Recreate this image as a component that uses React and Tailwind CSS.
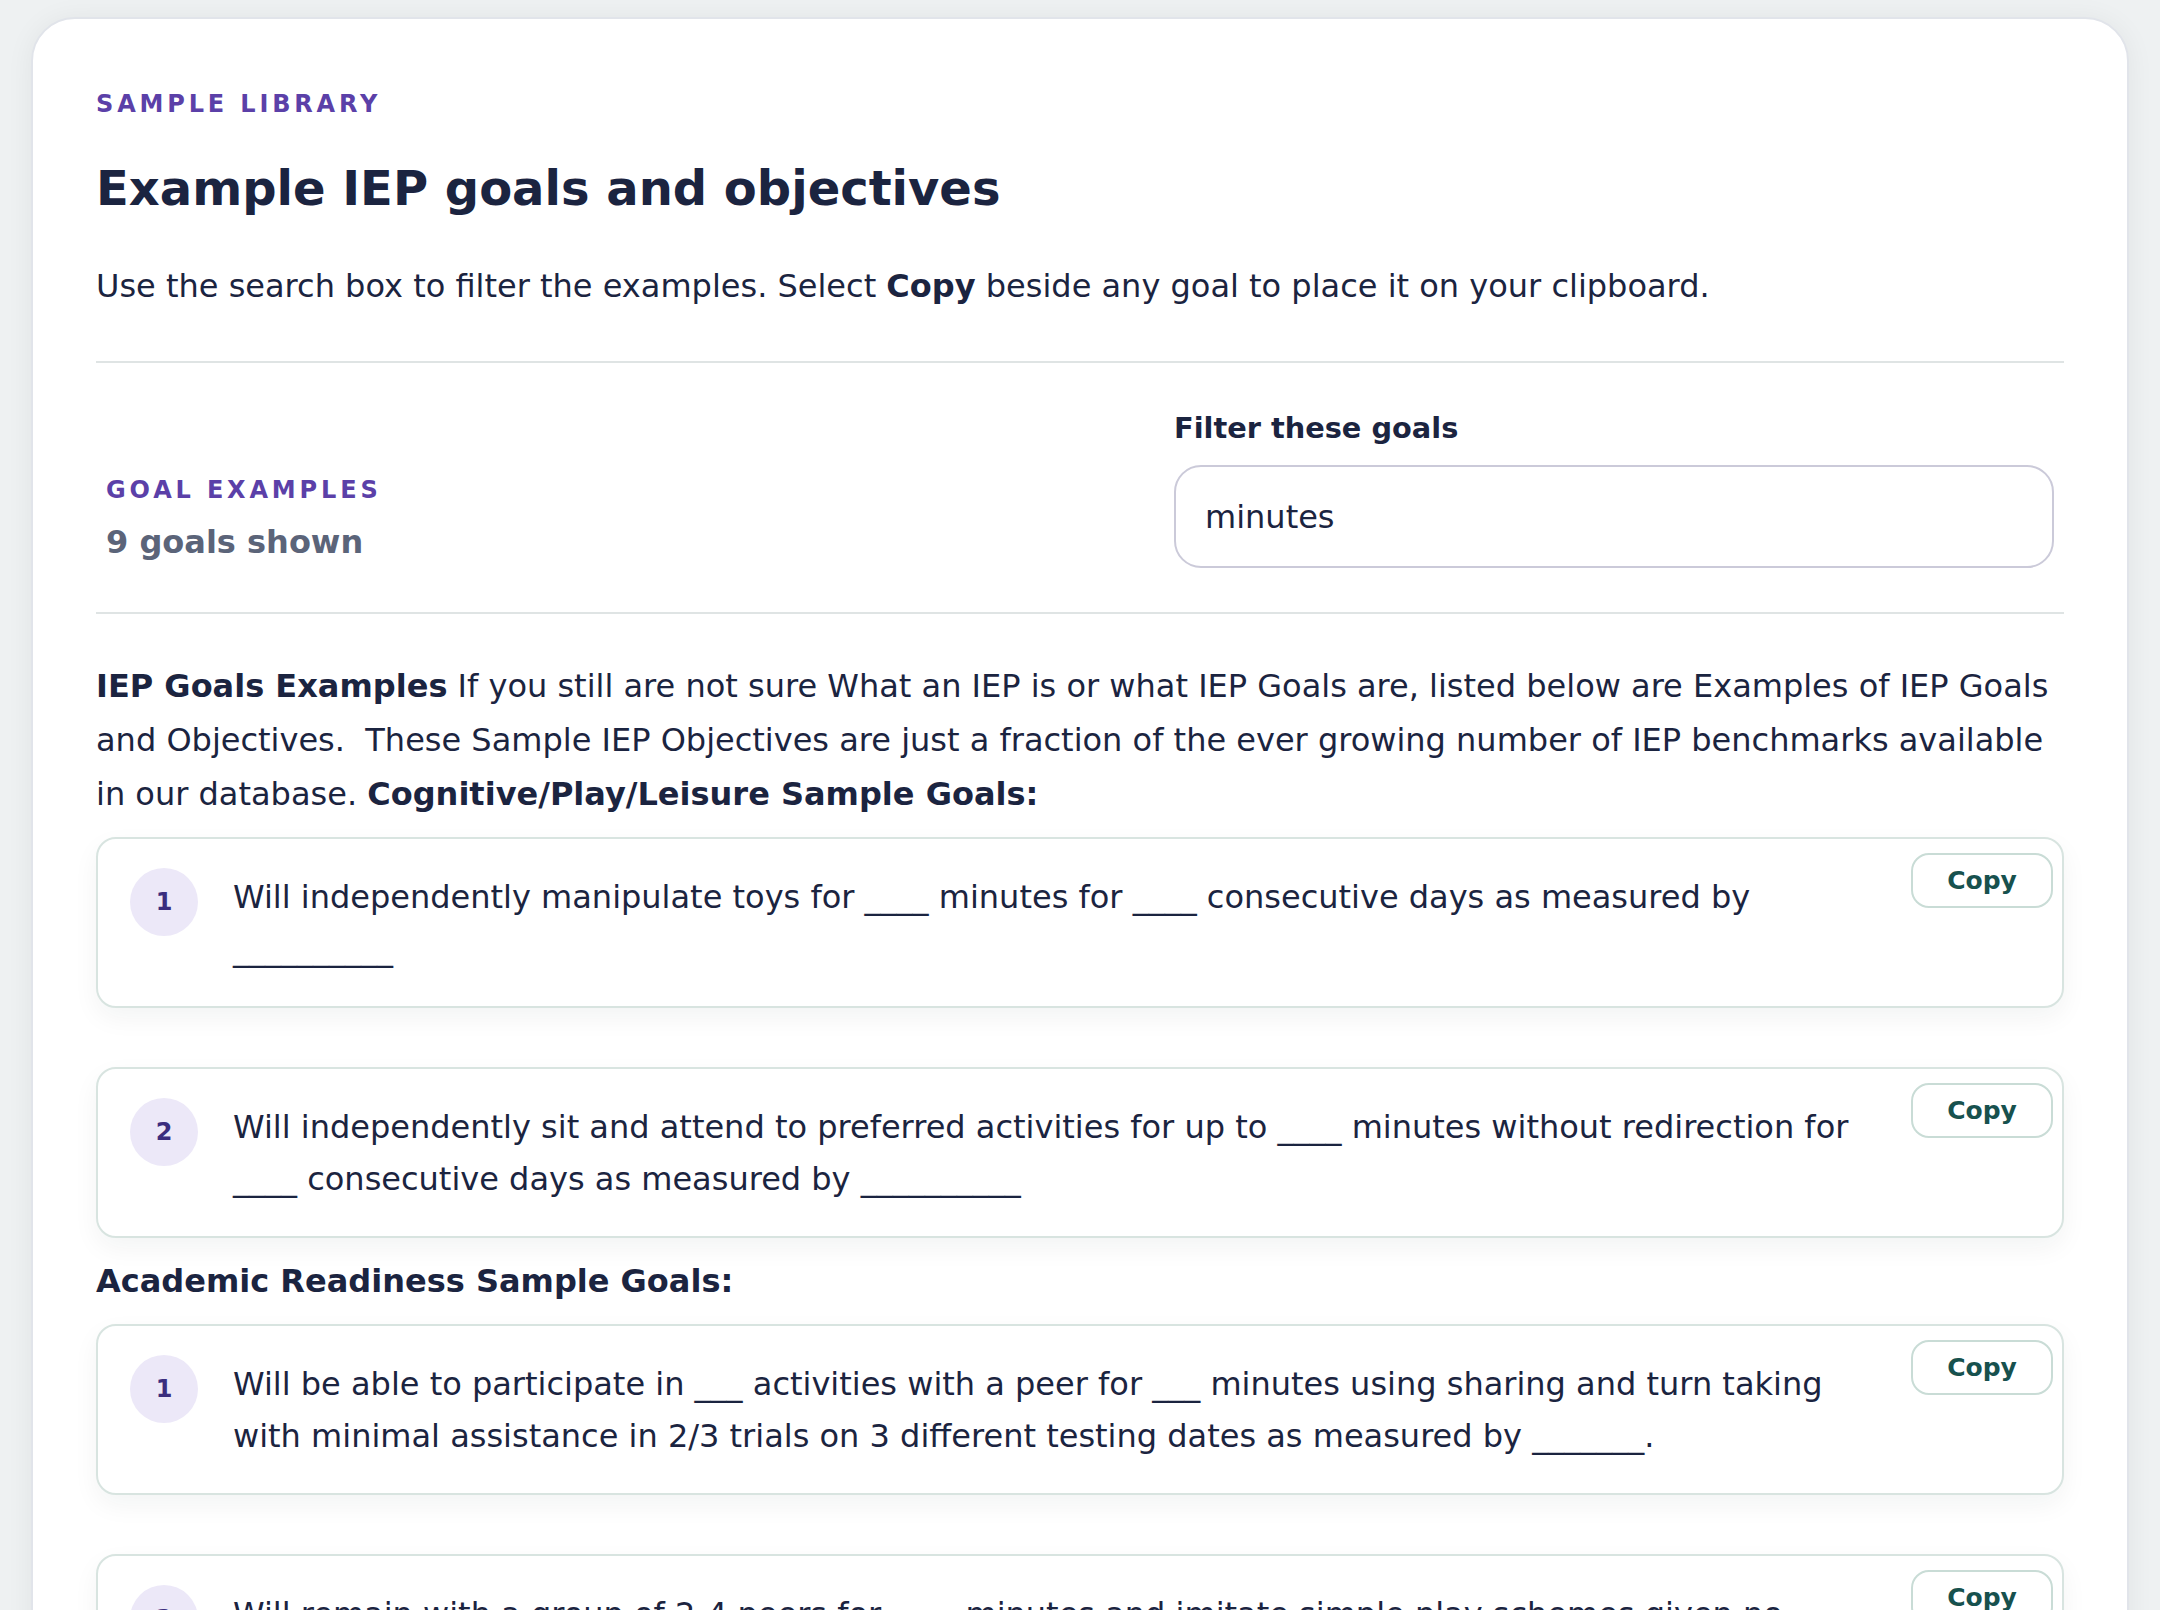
import { useState } from 'react';

const sections = [
  {
    heading: null,
    goals: [
      'Will independently manipulate toys for ____ minutes for ____ consecutive days as measured by __________',
      'Will independently sit and attend to preferred activities for up to ____ minutes without redirection for ____ consecutive days as measured by __________',
    ],
  },
  {
    heading: 'Academic Readiness Sample Goals:',
    goals: [
      'Will be able to participate in ___ activities with a peer for ___ minutes using sharing and turn taking with minimal assistance in 2/3 trials on 3 different testing dates as measured by _______.',
      'Will remain with a group of 2-4 peers for ____ minutes and imitate simple play schemes given no prompts in 4/5 opportunities as measured by _______.',
      'Will attend to a teacher-directed group activity for ___ minutes with no more than 1 redirection in 4/5 trials as measured by _______.',
    ],
  },
  {
    heading: 'Behavior Sample Goals:',
    goals: [
      'Will remain seated during structured work time for ___ minutes with minimal prompting for ___ consecutive days as measured by _______.',
      'Will use a calming strategy within 2 minutes of becoming upset in 4/5 opportunities as measured by _______.',
      'Will transition between activities within 3 minutes of a verbal cue for ___ consecutive days as measured by _______.',
      'Will work independently on an assigned task for ___ minutes without adult support in 4/5 trials as measured by _______.',
    ],
  },
];

function GoalCard({ n, text }) {
  return (
    <li className="flex items-start rounded-[20px] border-2 border-[#d8e4e0] bg-white pt-[14px] pr-[9px] pb-[31px] pl-[32px] shadow-[0_10px_26px_rgba(20,45,45,0.05)]">
      <span className="mt-[15px] flex h-[68px] w-[68px] shrink-0 items-center justify-center rounded-full bg-[#ece8f8] text-[24px] font-bold text-[#3b2d7e]">
        {n}
      </span>
      <p className="mt-[18px] ml-[35px] flex-1 pr-[30px] text-[32px] leading-[52px]">{text}</p>
      <button
        onClick={() => navigator.clipboard?.writeText(text)}
        className="h-[55px] w-[142px] shrink-0 rounded-[18px] border-2 border-[#c9dcd6] bg-white text-[25px] font-bold text-[#17514e]"
      >
        Copy
      </button>
    </li>
  );
}

export default function App() {
  const [query, setQuery] = useState('minutes');
  const q = query.trim().toLowerCase();
  const filtered = sections.map((s) => ({
    ...s,
    goals: s.goals.filter((g) => g.toLowerCase().includes(q)),
  }));
  const shown = filtered.reduce((sum, s) => sum + s.goals.length, 0);

  return (
    <div className="h-screen overflow-hidden bg-[#eef1f2] px-[31px] pt-[17px] font-['DejaVu_Sans',sans-serif] text-[#1b2440]">
      <main className="rounded-[44px] border-2 border-[#e1e4ea] bg-white px-[63px] pt-[69px] pb-[80px] shadow-[0_2px_28px_rgba(16,24,40,0.06)]">
        <p className="text-[24px] leading-[32px] font-bold tracking-[0.16em] text-[#5b40a8]">SAMPLE LIBRARY</p>
        <h1 className="mt-[39px] text-[48px] leading-[58px] font-bold">Example IEP goals and objectives</h1>
        <p className="mt-[45px] text-[32px] leading-[48px]">
          Use the search box to filter the examples. Select <strong>Copy</strong> beside any goal to place it on your clipboard.
        </p>

        <hr className="mt-[51px] border-t-2 border-[#dfe4e4]" />

        <div className="mt-[47px] flex items-end justify-between px-[10px]">
          <div className="pb-[4px]">
            <p className="text-[24px] leading-[32px] font-bold tracking-[0.16em] text-[#5b40a8]">GOAL EXAMPLES</p>
            <p className="mt-[14px] text-[32px] leading-[44px] font-bold text-[#5b6479]">{shown} goals shown</p>
          </div>
          <label className="flex w-[880px] flex-col">
            <span className="text-[28.8px] leading-[36px] font-bold">Filter these goals</span>
            <input
              value={query}
              onChange={(e) => setQuery(e.target.value)}
              className="mt-[19px] h-[103px] rounded-[27px] border-2 border-[#cbcad9] px-[29px] text-[32px] outline-none"
            />
          </label>
        </div>

        <hr className="mt-[44px] border-t-2 border-[#dfe4e4]" />

        <p className="mt-[45px] text-[32px] leading-[54px]">
          <strong>IEP Goals Examples</strong> If you still are not sure What an IEP is or what IEP Goals are, listed below are
          Examples of IEP Goals and Objectives.&nbsp; These Sample IEP Objectives are just a fraction of the ever growing number
          of IEP benchmarks available in our database. <strong>Cognitive/Play/Leisure Sample Goals:</strong>
        </p>

        {filtered.map((s, i) => (
          <section key={i}>
            {s.heading && <p className="mt-[16px] text-[32px] leading-[54px] font-bold">{s.heading}</p>}
            <ol className="mt-[16px] flex flex-col gap-[59px]">
              {s.goals.map((g, j) => (
                <GoalCard key={j} n={j + 1} text={g} />
              ))}
            </ol>
          </section>
        ))}
      </main>
    </div>
  );
}
